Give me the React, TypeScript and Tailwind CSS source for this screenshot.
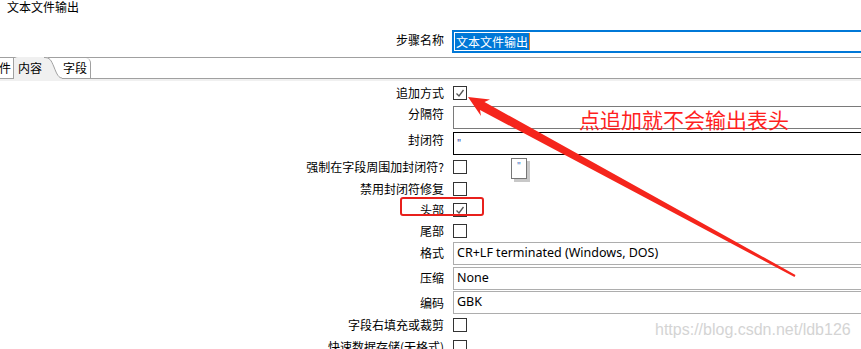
import type { ReactNode } from 'react'

const cjk = { fontFamily: '"Microsoft YaHei", "Noto Sans CJK SC", "Noto Sans", sans-serif' }
const latin = { fontFamily: '"Noto Sans", "Noto Sans CJK SC", sans-serif' }

function Casilla({ marcada = false }: { marcada?: boolean }) {
  return (
    <div className="w-[14px] h-[14px] border border-[#333] bg-white flex items-center justify-center">
      {marcada && (
        <svg width="10" height="10" viewBox="0 0 10 10">
          <polyline points="1.5,5.5 4,8 8.5,2" fill="none" stroke="#555" strokeWidth="1.3" />
        </svg>
      )}
    </div>
  )
}

function Fila({ etiqueta, alto, children, subir = false }: { etiqueta: string; alto: number; children: ReactNode; subir?: boolean }) {
  return (
    <div className="flex items-center" style={{ height: alto }}>
      <div className={`w-[445px] pr-[1px] text-right text-[12px] leading-[14px] text-black ${subir ? '-mt-[6px]' : ''}`}>
        {etiqueta}
      </div>
      <div className="ml-[8px] flex-1 flex items-center">{children}</div>
    </div>
  )
}

function Campo({ children, borde = 'border-[#adadad]' }: { children?: ReactNode; borde?: string }) {
  return (
    <div className={`h-[23px] w-full border border-r-0 ${borde} bg-white flex items-center pl-[3px] text-[12.5px] text-black`} style={latin}>
      {children}
    </div>
  )
}

export default function App() {
  return (
    <div className="relative w-[861px] h-[349px] overflow-hidden bg-white" style={cjk}>
      {/* título */}
      <div className="h-[30px] pl-[7px] text-[12px] leading-[14px] text-black">文本文件输出</div>

      {/* nombre del paso */}
      <div className="flex items-center h-[23px]">
        <div className="w-[444px] text-right text-[12px] leading-[14px] -mt-[4px]">步骤名称</div>
        <div className="ml-[8px] flex-1 h-[23px] border-2 border-r-0 border-[#0078d7] flex items-center pl-[1px]">
          <span className="bg-[#0078d7] text-white text-[12px] leading-[17px] px-[1px]">文本文件输出</span>
          <span className="w-[1px] h-[17px] bg-[#e08020]" />
        </div>
      </div>

      <div className="h-[4px]" />

      {/* pestañas */}
      <div className="flex h-[22px] border-t border-[#a0a0a0]">
        <div className="w-[15px] border-r border-b border-[#a0a0a0] text-[12px] leading-[20px] -ml-[1px] overflow-hidden">件</div>
        <div className="w-[30px] bg-[#f0f0f0] rounded-tl-[4px] -mt-[1px] text-[12px] leading-[22px] pl-[4px] whitespace-nowrap">
          内容
        </div>
        <svg className="-mt-[1px] shrink-0" width="18" height="22" viewBox="0 0 18 22">
          <path d="M0 0 C6 0 7 3 10 10 C13 18 15 21 18 21 L18 22 L0 22 Z" fill="#f0f0f0" />
          <path d="M0 0.5 C6 0.5 7 3 10 10 C13 18 15 21 18 21" fill="none" stroke="#a0a0a0" />
        </svg>
        <div className="w-[29px] border-r border-b border-[#a0a0a0] rounded-tr-[5px] text-[12px] leading-[20px] pl-[1px] whitespace-nowrap">字段</div>
        <div className="flex-1 border-b border-[#a0a0a0]" />
      </div>
      <div className="h-[2px] bg-[#f0f0f0]" />

      {/* contenido */}
      <div className="flex flex-col">
        <Fila etiqueta="追加方式" alto={23}><Casilla marcada /></Fila>
        <Fila etiqueta="分隔符" alto={26} subir><Campo borde="border-[#7a7a7a]" /></Fila>
        <Fila etiqueta="封闭符" alto={26} subir>
          <Campo borde="border-black"><span className="text-[#223399] text-[10px]">"</span></Campo>
        </Fila>
        <Fila etiqueta="强制在字段周围加封闭符?" alto={22}>
          <Casilla />
          <div className="relative ml-[44px] mt-[2px]">
            <div className="w-[16px] h-[21px] border border-[#777] bg-white flex justify-center pt-[2px] text-[9px] leading-[9px] text-[#3a70c0] shadow-[3px_3px_0_#c8c8c8]">"</div>
          </div>
        </Fila>
        <Fila etiqueta="禁用封闭符修复" alto={21}><Casilla /></Fila>
        <Fila etiqueta="头部" alto={21}><Casilla marcada /></Fila>
        <Fila etiqueta="尾部" alto={21}><Casilla /></Fila>
        <Fila etiqueta="格式" alto={24}><Campo>CR+LF terminated (Windows, DOS)</Campo></Fila>
        <Fila etiqueta="压缩" alto={26}><Campo>None</Campo></Fila>
        <Fila etiqueta="编码" alto={23}><Campo>GBK</Campo></Fila>
        <Fila etiqueta="字段右填充或裁剪" alto={22}><Casilla /></Fila>
        <Fila etiqueta="快速数据存储(无格式)" alto={21}><Casilla /></Fila>
      </div>

      {/* anotaciones */}
      <div className="absolute left-[400px] top-[197px] w-[84px] h-[19px] border-2 border-[#e8201c] rounded-[3px]" />
      <div className="absolute left-[579px] top-[106px] text-[21px] leading-[26px] text-[#ff1f1f]">点追加就不会输出表头</div>
      <svg className="absolute left-0 top-0" width="861" height="349" viewBox="0 0 861 349">
        <polygon
          points="468,97 490,99.5 484.5,102 795.5,275 794.5,277 480,110 481,116"
          fill="#f5251c"
        />
      </svg>
      <div
        className="absolute left-[655px] top-[320px] text-[16px] leading-[20px] text-[#d4d4d4]"
        style={{ fontFamily: '"Liberation Sans", Arial, sans-serif' }}
      >
        https://blog.csdn.net/ldb126
      </div>
    </div>
  )
}
